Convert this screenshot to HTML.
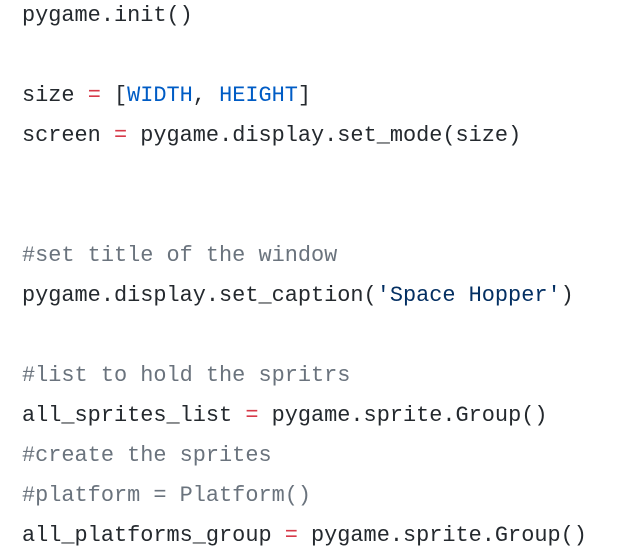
<!DOCTYPE html>
<html><head><style>
html,body{margin:0;padding:0;background:#fff;width:637px;height:552px;overflow:hidden}
pre{margin:0;position:absolute;left:22px;top:-4px;font-family:"Liberation Mono",monospace;font-size:21.9px;line-height:40px;color:#24292e}
.k{color:#d73a49}.c{color:#005cc5}.m{color:#6a737d}.s{color:#032f62}
</style></head><body>
<pre>pygame.init()

size <span class="k">=</span> [<span class="c">WIDTH</span>, <span class="c">HEIGHT</span>]
screen <span class="k">=</span> pygame.display.set_mode(size)


<span class="m">#set title of the window</span>
pygame.display.set_caption(<span class="s">'Space Hopper'</span>)

<span class="m">#list to hold the spritrs</span>
all_sprites_list <span class="k">=</span> pygame.sprite.Group()
<span class="m">#create the sprites</span>
<span class="m">#platform = Platform()</span>
all_platforms_group <span class="k">=</span> pygame.sprite.Group()</pre>
</body></html>
